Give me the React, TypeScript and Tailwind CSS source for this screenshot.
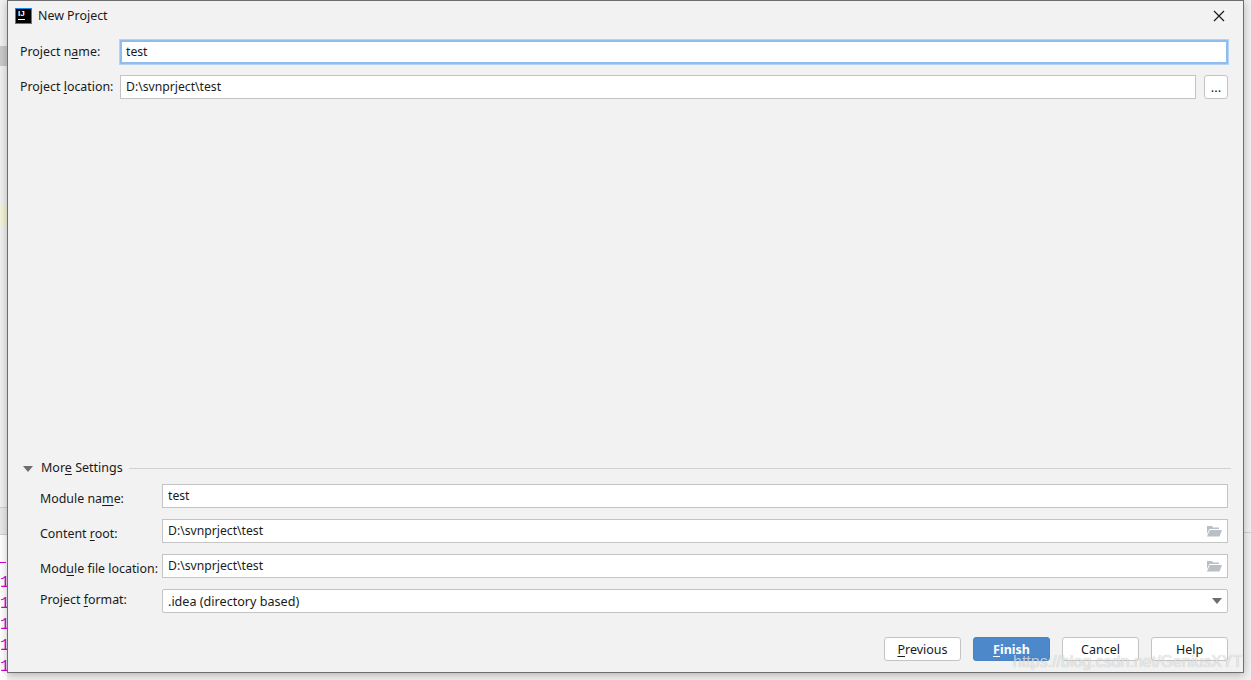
import React from 'react';

const font = { fontFamily: '"Noto Sans", sans-serif' };

function Mnemonic({ before, letter, after }: { before: string; letter: string; after: string }) {
  return (
    <>
      {before}
      <span className="underline underline-offset-2">{letter}</span>
      {after}
    </>
  );
}

function FolderIcon() {
  return (
    <svg width="16" height="12" viewBox="0 0 16 12" className="shrink-0">
      <path d="M1 1h5l1 1.500h6V4H3.500L1 9z" fill="#b9bfc4" />
      <path d="M3.800 5H16l-2.500 6.500H1z" fill="#b9bfc4" />
    </svg>
  );
}

function Field({ value, icon }: { value: string; icon?: React.ReactNode }) {
  return (
    <div className="flex h-6 min-w-0 flex-1 items-center justify-between border border-[#c4c4c4] bg-white pl-[5px] pr-[5px] text-[12.2px] leading-none text-[#1a1a1a]">
      <span>{value}</span>
      {icon}
    </div>
  );
}

function Button({ children, primary }: { children: React.ReactNode; primary?: boolean }) {
  return (
    <div
      className={
        primary
          ? 'flex h-6 w-[77px] items-center justify-center rounded-[3px] border border-[#4a82c2] bg-[#4d88ca] pt-[2px] text-[12.5px] font-bold text-white'
          : 'flex h-6 w-[77px] items-center justify-center rounded-[3px] border border-[#c4c4c4] bg-white pt-[2px] text-[12.5px] text-[#1a1a1a]'
      }
    >
      {children}
    </div>
  );
}

function ModuleRow({ label, children, shift }: { label: React.ReactNode; children: React.ReactNode; shift: string }) {
  return (
    <div className="flex h-6 items-center">
      <div className={`w-[122px] shrink-0 whitespace-nowrap text-[12.4px] text-[#1a1a1a] ${shift}`}>{label}</div>
      {children}
    </div>
  );
}

export default function App() {
  return (
    <div className="relative h-[680px] w-[1251px] overflow-hidden bg-[#f0f0f0]" style={font}>
      {/* IDE window peeking out behind the dialog */}
      <div className="absolute left-0 top-[46px] h-5 w-[7px] bg-[#c9c9c9]" />
      <div className="absolute left-0 top-[206px] h-5 w-[7px] bg-[#f3f3d8]" />
      <div className="absolute left-0 top-[507px] h-[27px] w-[7px] border-t border-[#d0d0d0] bg-[#e8e8e8]" />
      <div className="absolute left-0 top-[534px] h-[146px] w-[7px] border-t border-[#d0d0d0] bg-white" />
      <div className="absolute left-0 top-[562px] h-px w-[6px] bg-[#d400d4]" />
      {[575, 596, 617, 638, 659].map((top) => (
        <div
          key={top}
          className="absolute left-0 w-[7px] text-[16px] leading-4 text-[#d400d4]"
          style={{ top, fontFamily: '"Liberation Mono", monospace' }}
        >
          1
        </div>
      ))}
      <div className="absolute left-[1244px] top-[532px] h-px w-[7px] bg-[#d0d0d0]" />

      {/* Dialog */}
      <div className="absolute left-[7px] top-0 flex h-[673px] w-[1237px] flex-col border border-[#6e6e6e] bg-[#f2f2f2] shadow-[0_2px_8px_rgba(0,0,0,0.25)]">
        <div className="flex h-[30px] shrink-0 items-center pl-[7px] pr-[18px]">
          <div
            className="flex h-4 w-[17px] flex-col border border-[#1e88e5] bg-black pl-[2px] text-[8px] font-bold leading-[9px] text-white"
            style={{ fontFamily: '"Liberation Sans", sans-serif' }}
          >
            IJ
            <div className="mt-[1px] h-px w-[7px] bg-white" />
          </div>
          <span className="ml-[6px] text-[12.4px] text-[#1a1a1a]">New Project</span>
          <svg width="12" height="12" viewBox="0 0 12 12" className="ml-auto" stroke="#1a1a1a" strokeWidth="1.200">
            <path d="M1 1l10 10M11 1L1 11" />
          </svg>
        </div>

        <div className="mt-[9px] flex h-6 items-center pl-[12px] pr-[15px]">
          <div className="w-[100px] shrink-0 text-[12.4px] text-[#1a1a1a]">
            <Mnemonic before="Project n" letter="a" after="me:" />
          </div>
          <div className="flex h-6 flex-1 items-center border-2 border-[#8fbcee] bg-white pl-[4px] text-[12.2px] text-[#1a1a1a] shadow-[0_0_0_1px_#b5d3f3]">
            test
          </div>
        </div>

        <div className="mt-[11px] flex h-6 items-center pl-[12px] pr-[15px]">
          <div className="w-[100px] shrink-0 whitespace-nowrap text-[12.4px] text-[#1a1a1a]">
            <Mnemonic before="Project " letter="l" after="ocation:" />
          </div>
          <Field value="D:\svnprject\test" />
          <div className="ml-2 flex h-6 w-6 items-center justify-center rounded-[3px] border border-[#c4c4c4] bg-white text-[13px] leading-none text-[#1a1a1a]">
            ...
          </div>
        </div>

        <div className="flex-1" />

        <div className="flex items-center pl-[15px] pr-3">
          <svg width="10" height="6" viewBox="0 0 10 6">
            <path d="M0 0h10L5 6z" fill="#6e6e6e" />
          </svg>
          <span className="ml-2 text-[12.5px] text-[#1a1a1a]">
            <Mnemonic before="Mor" letter="e" after=" Settings" />
          </span>
          <div className="ml-[6px] h-px flex-1 bg-[#d1d1d1]" />
        </div>

        <div className="mt-[6px] flex flex-col gap-[11px] pl-[32px] pr-[15px]">
          <ModuleRow label={<Mnemonic before="Module na" letter="m" after="e:" />} shift="translate-y-[3px]">
            <Field value="test" />
          </ModuleRow>
          <ModuleRow label={<Mnemonic before="Content " letter="r" after="oot:" />} shift="translate-y-[3px]">
            <Field value="D:\svnprject\test" icon={<FolderIcon />} />
          </ModuleRow>
          <ModuleRow label={<Mnemonic before="Mod" letter="u" after="le file location:" />} shift="translate-y-[3px]">
            <Field value="D:\svnprject\test" icon={<FolderIcon />} />
          </ModuleRow>
          <ModuleRow label={<Mnemonic before="Project " letter="f" after="ormat:" />} shift="-translate-y-px">
            <div className="flex h-6 min-w-0 flex-1 items-center justify-between rounded-[2px] border border-[#c4c4c4] bg-white pl-[5px] pr-[5px] text-[12.6px] text-[#1a1a1a]">
              <span className="translate-y-px">.idea (directory based)</span>
              <svg width="10" height="6" viewBox="0 0 10 6">
                <path d="M0 0h10L5 6z" fill="#6e6e6e" />
              </svg>
            </div>
          </ModuleRow>
        </div>

        <div className="mb-[11px] mt-6 flex justify-end gap-3 pr-[15px]">
          <Button>
            <Mnemonic before="" letter="P" after="revious" />
          </Button>
          <Button primary>
            <Mnemonic before="" letter="F" after="inish" />
          </Button>
          <Button>Cancel</Button>
          <Button>Help</Button>
        </div>
      </div>

      {/* Watermark over the picture */}
      <div
        className="absolute left-[1013px] top-[650px] whitespace-nowrap text-[16px] text-white/70 [text-shadow:0_0_1px_rgba(0,0,0,0.3)]"
        style={{ fontFamily: '"Liberation Sans", sans-serif' }}
      >
        https://blog.csdn.net/GeniusXYT
      </div>
    </div>
  );
}
